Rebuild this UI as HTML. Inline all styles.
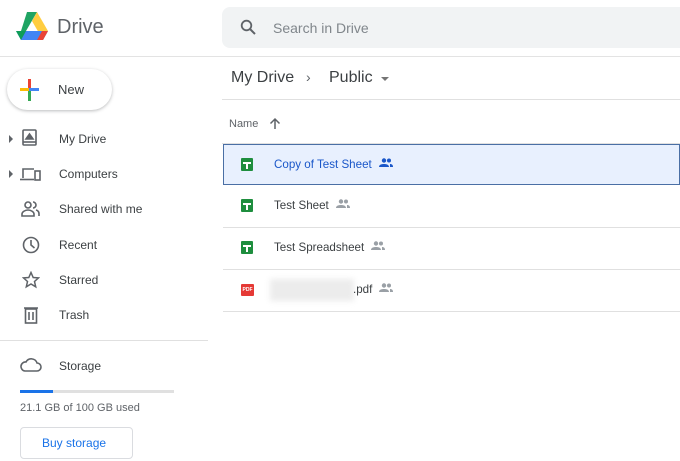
<!DOCTYPE html>
<html><head><meta charset="utf-8"><style>
*{margin:0;padding:0;box-sizing:border-box}
body{width:680px;height:461px;overflow:hidden;background:#fff;font-family:"Liberation Sans",Arial,sans-serif;position:relative;color:#3c4043}
.a{position:absolute}
.nav{position:absolute;left:59px;font-size:12px;color:#3c4043}
.row{position:absolute;left:223px;width:457px;height:42px;border-bottom:1px solid #e0e0e0}
.row .t{position:absolute;left:51px;top:13px;font-size:11.6px;color:#3c4043;white-space:nowrap}
.row .t svg{margin-left:7px;vertical-align:0px}
.sh{position:absolute;left:18px;top:13px;width:12px;height:13px;background:#1e8e3e;border-radius:1px}
.sh:before{content:"";position:absolute;left:2px;top:4px;width:8px;height:1.5px;background:#fff}
.sh:after{content:"";position:absolute;left:5px;top:4px;width:1.5px;height:7px;background:#fff}
</style></head><body>
<div class="a" style="left:0;top:56px;width:680px;height:1px;background:#e3e3e3"></div>
<svg class="a" style="left:16px;top:12px" width="32" height="29" viewBox="0 0 32 29">
<polygon points="11,0 21,0 10,19 5,19" fill="#1fa463"/>
<polygon points="21,0 32,19 27,28 16,9" fill="#ffcd40"/>
<polygon points="0,19 10,19 32,19 27,28 5,28" fill="#4285f4"/>
<polygon points="0,19 10,19 5,28" fill="#0f9d58"/>
<polygon points="32,19 27,28 21,28 26,19" fill="#ea4335"/>
</svg>
<div class="a" style="left:57px;top:16px;font-size:20px;color:#5f6368">Drive</div>
<div class="a" style="left:222px;top:7px;width:470px;height:41px;background:#f1f3f4;border-radius:8px"></div>
<svg class="a" style="left:240px;top:19px" width="16" height="16" viewBox="0 0 16 16"><circle cx="6.5" cy="6.5" r="4.8" fill="none" stroke="#5f6368" stroke-width="1.8"/><line x1="10" y1="10" x2="15" y2="15" stroke="#5f6368" stroke-width="2"/></svg>
<div class="a" style="left:273px;top:20px;font-size:14px;color:#80868b">Search in Drive</div>
<div class="a" style="left:7px;top:69px;width:105px;height:41px;border-radius:21px;background:#fff;box-shadow:0 1px 3px rgba(60,64,67,.35)"></div>
<div class="a" style="left:20px;top:88px;width:9px;height:3px;background:#fbbc04"></div>
<div class="a" style="left:29px;top:88px;width:10px;height:3px;background:#4285f4"></div>
<div class="a" style="left:28px;top:79px;width:3px;height:9px;background:#ea4335"></div>
<div class="a" style="left:28px;top:91px;width:3px;height:10px;background:#34a853"></div>
<div class="a" style="left:58px;top:82px;font-size:13px;color:#3c4043">New</div>
<div class="a" style="left:9px;top:135px;border-left:4px solid #5f6368;border-top:4px solid transparent;border-bottom:4px solid transparent"></div>
<div class="a" style="left:9px;top:170px;border-left:4px solid #5f6368;border-top:4px solid transparent;border-bottom:4px solid transparent"></div>
<svg class="a" style="left:21px;top:129px" width="18" height="18" viewBox="0 0 18 18" fill="none" stroke="#5f6368" stroke-width="1.6"><rect x="2" y="1" width="13" height="15" rx="1"/><path d="M5 10h7l-3.5-5z" fill="#5f6368"/><line x1="2" y1="13" x2="15" y2="13"/></svg>
<svg class="a" style="left:20px;top:166px" width="22" height="16" viewBox="0 0 22 16" fill="none" stroke="#5f6368" stroke-width="1.6"><path d="M3 12V3h11"/><line x1="0" y1="13.5" x2="14" y2="13.5"/><rect x="15" y="5" width="5" height="9"/></svg>
<svg class="a" style="left:21px;top:200px" width="20" height="18" viewBox="0 0 20 18" fill="none" stroke="#5f6368" stroke-width="1.6"><circle cx="7" cy="5" r="3"/><path d="M1 16v-2c0-2 3-4 6-4s6 2 6 4v2z"/><path d="M12 2a3 3 0 0 1 0 6M15 10c2 .5 3 2 3 4v2"/></svg>
<svg class="a" style="left:22px;top:236px" width="18" height="18" viewBox="0 0 18 18" fill="none" stroke="#5f6368" stroke-width="1.6"><circle cx="9" cy="9" r="7.5"/><path d="M9 4v5l3.5 3"/></svg>
<svg class="a" style="left:22px;top:271px" width="18" height="18" viewBox="0 0 18 18" fill="none" stroke="#5f6368" stroke-width="1.5"><path d="M9 1.5l2.2 5 5.3.4-4 3.6 1.2 5.3L9 13l-4.7 2.8 1.2-5.3-4-3.6 5.3-.4z"/></svg>
<svg class="a" style="left:24px;top:306px" width="14" height="18" viewBox="0 0 14 18" fill="none" stroke="#5f6368" stroke-width="1.6"><rect x="1.5" y="3" width="11" height="14"/><path d="M0 2h14M5 6v8M9 6v8"/></svg>
<div class="nav" style="top:132px">My Drive</div>
<div class="nav" style="top:167px">Computers</div>
<div class="nav" style="top:202px">Shared with me</div>
<div class="nav" style="top:238px">Recent</div>
<div class="nav" style="top:273px">Starred</div>
<div class="nav" style="top:308px">Trash</div>
<div class="a" style="left:0;top:340px;width:208px;height:1px;background:#e0e0e0"></div>
<svg class="a" style="left:20px;top:357px" width="22" height="16" viewBox="0 0 22 16" fill="none" stroke="#5f6368" stroke-width="1.6"><path d="M5 14h12a4 4 0 0 0 0-8 6 6 0 0 0-11-1A4.5 4.5 0 0 0 5 14z"/></svg>
<div class="nav" style="top:359px">Storage</div>
<div class="a" style="left:20px;top:390px;width:154px;height:3px;background:#e0e0e0"></div>
<div class="a" style="left:20px;top:390px;width:33px;height:3px;background:#1a73e8"></div>
<div class="a" style="left:20px;top:402px;font-size:11px;color:#5f6368">21.1 GB of 100 GB used</div>
<div class="a" style="left:20px;top:427px;width:113px;height:32px;border:1px solid #dadce0;border-radius:4px"></div>
<div class="a" style="left:42px;top:436px;font-size:12px;color:#1a73e8">Buy storage</div>
<div class="a" style="left:231px;top:69px;font-size:16px;color:#3c4043">My Drive</div>
<div class="a" style="left:306px;top:69px;font-size:14px;color:#5f6368">›</div>
<div class="a" style="left:329px;top:69px;font-size:16px;color:#3c4043">Public</div>
<div class="a" style="left:381px;top:77px;border-top:4px solid #757575;border-left:4px solid transparent;border-right:4px solid transparent"></div>
<div class="a" style="left:222px;top:99px;width:458px;height:1px;background:#e0e0e0"></div>
<div class="a" style="left:229px;top:118px;font-size:11px;color:#5f6368">Name</div>
<svg class="a" style="left:269px;top:117px" width="12" height="13" viewBox="0 0 12 13" fill="none" stroke="#5f6368" stroke-width="1.5"><path d="M6 12V2M1.5 6.5L6 2l4.5 4.5"/></svg>
<div class="a" style="left:222px;top:143px;width:458px;height:1px;background:#e0e0e0"></div>
<div class="row" style="top:144px;height:41px;background:#e8f0fe;border:1px solid #4a6fa5"><div class="sh" style="left:17px;top:13px"></div><div class="t" style="left:50px;color:#1a57c9">Copy of Test Sheet<svg width="14" height="10" viewBox="0 0 14 10" fill="#1a57c9"><circle cx="5" cy="2.5" r="2.2"/><circle cx="10" cy="2.5" r="2"/><path d="M0 9c0-2 2-3 5-3s5 1 5 3zM11 6c2 0 3 1 3 3h-3z"/></svg></div></div>
<div class="row" style="top:186px"><div class="sh"></div><div class="t">Test Sheet<svg width="14" height="10" viewBox="0 0 14 10" fill="#9aa0a6"><circle cx="5" cy="2.5" r="2.2"/><circle cx="10" cy="2.5" r="2"/><path d="M0 9c0-2 2-3 5-3s5 1 5 3zM11 6c2 0 3 1 3 3h-3z"/></svg></div></div>
<div class="row" style="top:228px"><div class="sh"></div><div class="t">Test Spreadsheet<svg width="14" height="10" viewBox="0 0 14 10" fill="#9aa0a6"><circle cx="5" cy="2.5" r="2.2"/><circle cx="10" cy="2.5" r="2"/><path d="M0 9c0-2 2-3 5-3s5 1 5 3zM11 6c2 0 3 1 3 3h-3z"/></svg></div></div>
<div class="row" style="top:270px"><div class="a" style="left:18px;top:14px;width:13px;height:12px;background:#e53935;border-radius:1px;color:#fff;font-size:5px;line-height:12px;text-align:center;font-weight:bold">PDF</div>
<div class="a" style="left:47px;top:9px;width:84px;height:22px;background:#ececec;filter:blur(3px)"></div>
<div class="t" style="left:130px">.pdf<svg width="14" height="10" viewBox="0 0 14 10" fill="#9aa0a6"><circle cx="5" cy="2.5" r="2.2"/><circle cx="10" cy="2.5" r="2"/><path d="M0 9c0-2 2-3 5-3s5 1 5 3zM11 6c2 0 3 1 3 3h-3z"/></svg></div></div>
</body></html>
